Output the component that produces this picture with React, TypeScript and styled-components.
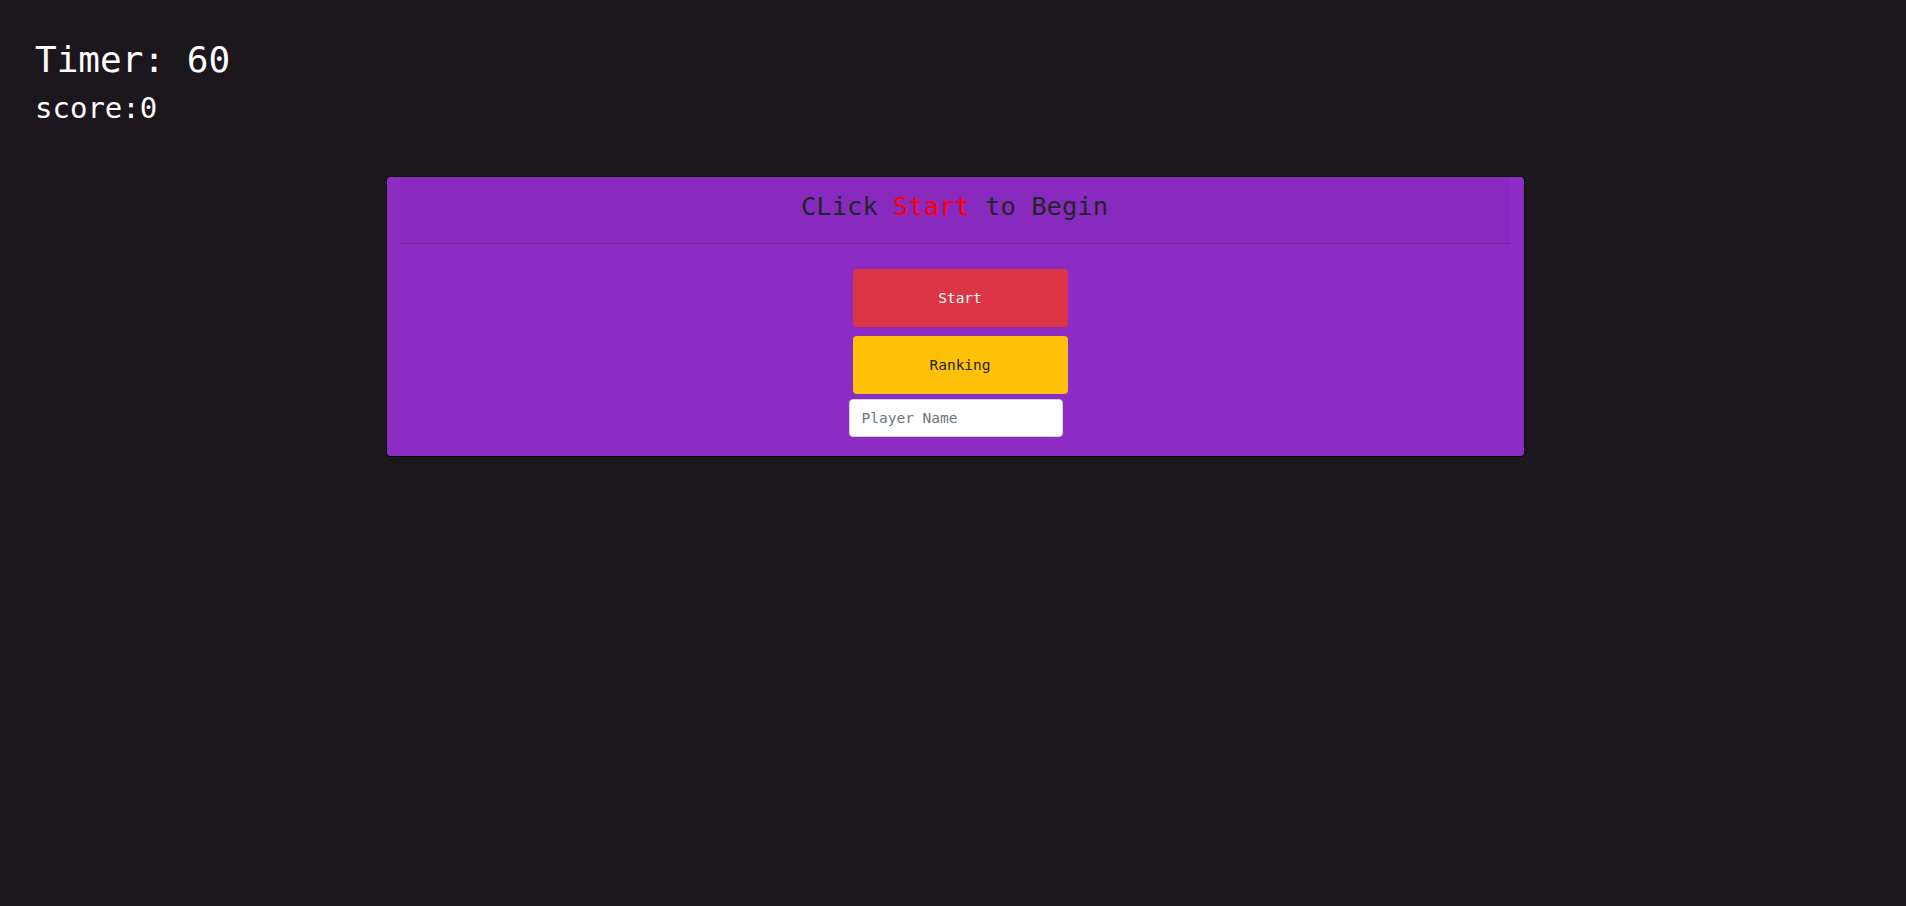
import styled, { createGlobalStyle } from "styled-components";

const GlobalStyle = createGlobalStyle`
    html, body {
        margin: 0;
        padding: 0;
        background-color: #1b171c;
        font-family: "DejaVu Sans Mono", "Liberation Mono", monospace;
    }
`;

const Page = styled.div`
    min-height: 906px;
    padding: 38px 0 0 35px;
    box-sizing: border-box;
    color: #ffffff;
`;

const Timer = styled.h1`
    margin: 0;
    font-size: 36px;
    font-weight: normal;
    line-height: 1.2;
`;

const Score = styled.h2`
    margin: 10px 0 0;
    font-size: 29px;
    font-weight: normal;
    line-height: 1.2;
`;

const Card = styled.div`
    width: 1139px;
    margin: 50px 0 0 351px;
    box-sizing: border-box;
    background-color: #8d2cc4;
    border: 1px solid #000000;
    border-radius: 4px;
    display: flex;
    flex-direction: column;
    padding-bottom: 19px;
`;

const Header = styled.div`
    margin: 0 14px 0 12px;
    padding: 14px 0 21px;
    background-color: rgba(0, 0, 0, 0.03);
    border-bottom: 1px solid rgba(0, 0, 0, 0.125);
    text-align: center;
`;

const Title = styled.h3`
    margin: 0;
    font-size: 25.5px;
    font-weight: normal;
    line-height: 1.2;
    color: #212529;
`;

const Highlight = styled.span`
    color: #ff0000;
`;

const Body = styled.div`
    display: flex;
    flex-direction: column;
    align-items: center;
    padding-top: 25px;
`;

const Button = styled.button<{ $variant: "danger" | "warning" }>`
    width: 215px;
    height: 58px;
    margin: 0 0 9px 9px;
    border: none;
    border-radius: 4px;
    font-family: inherit;
    font-size: 14.5px;
    cursor: pointer;
    background-color: ${p => p.$variant === "danger" ? "#dc3545" : "#ffc107"};
    color: ${p => p.$variant === "danger" ? "#ffffff" : "#212529"};
`;

const NameInput = styled.input`
    width: 214px;
    height: 38px;
    margin-top: -4px;
    box-sizing: border-box;
    padding: 6px 12px;
    border: 1px solid #ced4da;
    border-radius: 4px;
    background: #ffffff;
    font-family: inherit;
    font-size: 14.5px;
    color: #212529;

    &::placeholder {
        color: #6c757d;
    }
`;

export default function App() {
    return <Page>
        <GlobalStyle/>
        <Timer>Timer: 60</Timer>
        <Score>score:0</Score>
        <Card>
            <Header>
                <Title>CLick <Highlight>Start</Highlight> to Begin</Title>
            </Header>
            <Body>
                <Button $variant="danger">Start</Button>
                <Button $variant="warning">Ranking</Button>
                <NameInput placeholder="Player Name"/>
            </Body>
        </Card>
    </Page>
}
